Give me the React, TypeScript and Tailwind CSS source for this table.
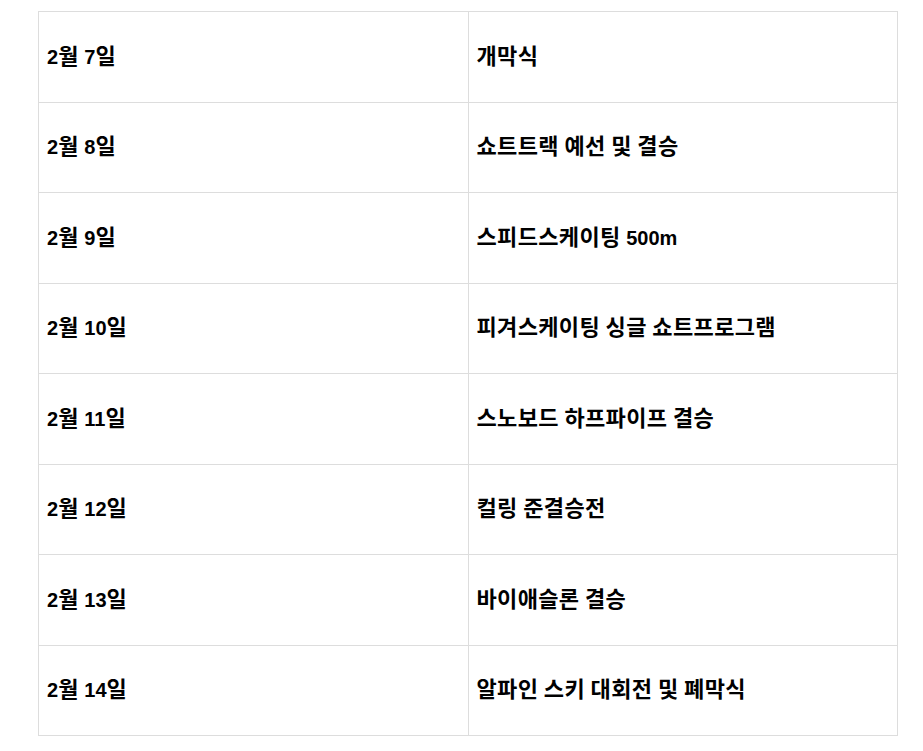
const schedule = [
  { date: "2월 7일", event: "개막식" },
  { date: "2월 8일", event: "쇼트트랙 예선 및 결승" },
  { date: "2월 9일", event: "스피드스케이팅 500m" },
  { date: "2월 10일", event: "피겨스케이팅 싱글 쇼트프로그램" },
  { date: "2월 11일", event: "스노보드 하프파이프 결승" },
  { date: "2월 12일", event: "컬링 준결승전" },
  { date: "2월 13일", event: "바이애슬론 결승" },
  { date: "2월 14일", event: "알파인 스키 대회전 및 폐막식" },
];

// hangul in the shot is drawn larger (full 1em advance), so bump those runs
const Text = ({ value }: { value: string }) => (
  <>
    {value.split(/([가-힣]+)/).map((part, i) =>
      /[가-힣]/.test(part) ? (
        <span key={i} className="text-[22px] tracking-[0.35px]">
          {part}
        </span>
      ) : (
        <span key={i}>{part}</span>
      )
    )}
  </>
);

const App = () => {
  return (
    <div
      className="min-h-screen bg-white pt-[11px] pl-[38px]"
      style={{ fontFamily: '"Liberation Sans", "Noto Sans CJK KR", sans-serif' }}
    >
      <table className="w-[860px] border-collapse table-fixed text-black">
        <tbody>
          {schedule.map((row) => (
            <tr key={row.date} className="h-[90.5px]">
              <td className="border border-[#dddddd] px-2 align-middle text-[20px] leading-7 font-bold">
                <Text value={row.date} />
              </td>
              <td className="border border-[#dddddd] px-2 align-middle text-[20px] leading-7 font-bold">
                <Text value={row.event} />
              </td>
            </tr>
          ))}
        </tbody>
      </table>
    </div>
  );
};

export default App;
